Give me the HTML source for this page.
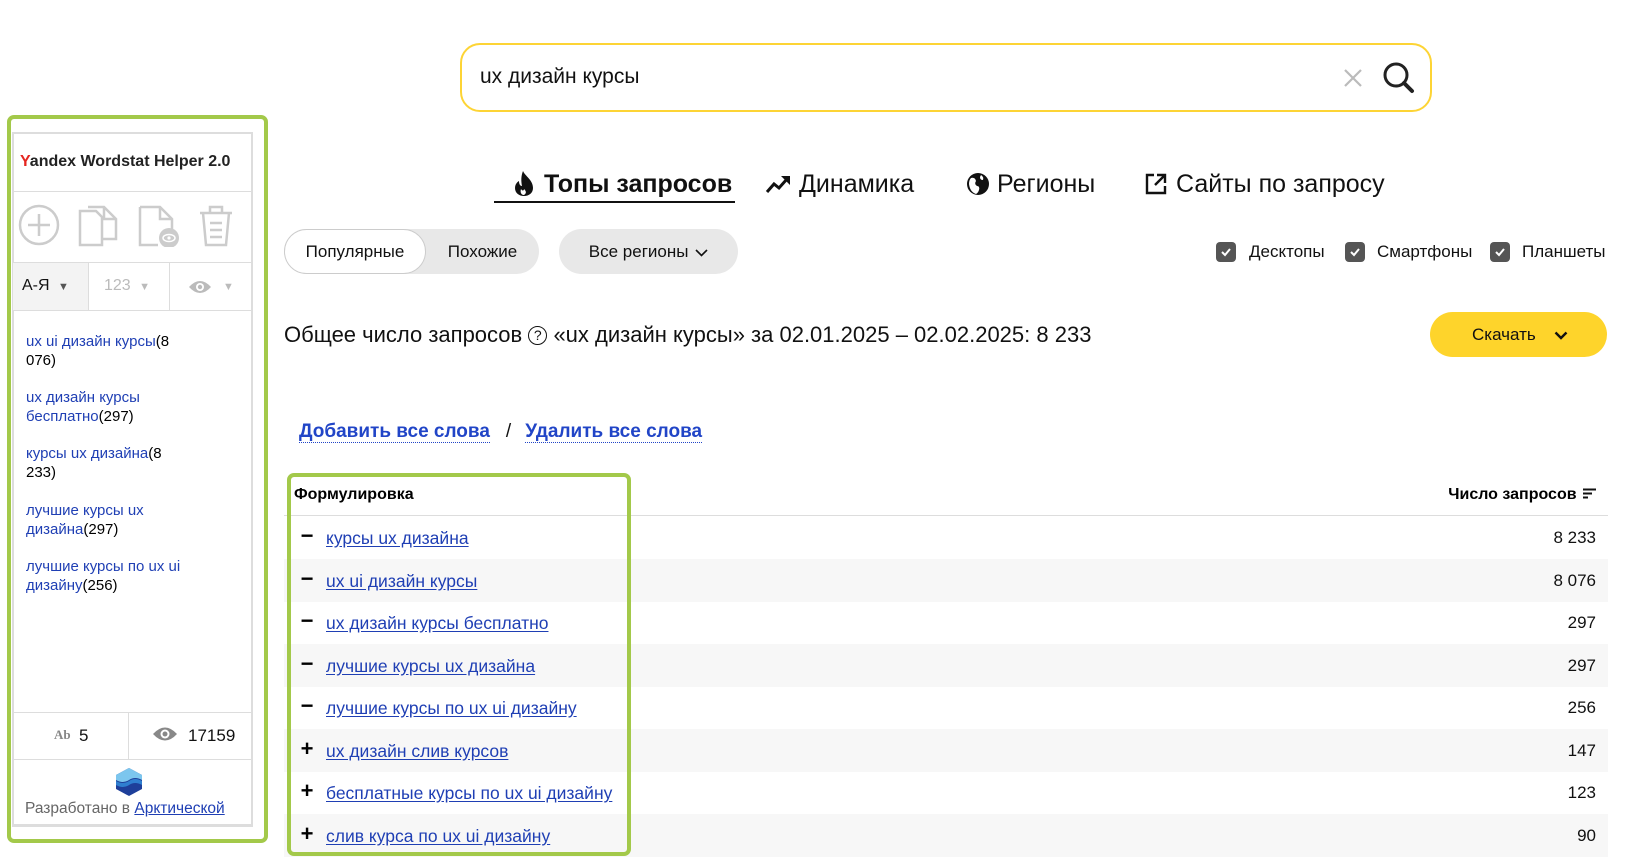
<!DOCTYPE html>
<html><head><meta charset="utf-8">
<style>
*{box-sizing:border-box;margin:0;padding:0}
body{width:1642px;height:856px;background:#fff;font-family:"Liberation Sans","DejaVu Sans",sans-serif;color:#000;position:relative;overflow:hidden}
.abs{position:absolute}
.search{left:460px;top:43px;width:972px;height:69px;border:2px solid #fdd435;border-radius:20px}
.search .q{position:absolute;left:18px;top:20px;font-size:21px;color:#111}
.panel{left:7px;top:115px;width:261px;height:728px;border:4px solid #a3c94a;border-radius:7px}
.inner{left:12px;top:132px;width:241px;height:695px;border:2px solid #ddd;border-bottom:3px solid #ddd}
.ln{background:#ddd;height:1px}
.plink{color:#1f3fb4;text-decoration:none}
.list{left:26px;font-size:15px;line-height:19px;width:165px}
.tab{font-size:25px;top:170px;color:#111}
.pill{top:229px;height:45px;font-size:17px;line-height:45px;text-align:center;color:#111}
.cb{top:242px;width:20px;height:20px;background:#555;border-radius:4px}
.cbt{top:242px;font-size:17px;line-height:20px;color:#111}
.row{left:284px;width:1324px;height:42.5px}
.row.g{background:#f7f7f7}
.sign{left:300px;font-size:22px;font-weight:bold;width:14px;text-align:center}
.lk{left:326px;font-size:17.5px;color:#1f3fb4;text-decoration:underline;text-underline-offset:2px}
.num{right:46px;font-size:17px;color:#111;text-align:right}
</style></head><body>

<div class="abs search"><span class="q">ux дизайн курсы</span>
<svg class="abs" style="left:880px;top:22px" width="22" height="22" viewBox="0 0 22 22"><path d="M3 3L19 19M19 3L3 19" stroke="#bbb" stroke-width="2.2"/></svg>
<svg class="abs" style="left:920px;top:16px" width="34" height="34" viewBox="0 0 34 34"><circle cx="14" cy="14" r="11" fill="none" stroke="#222" stroke-width="3"/><path d="M22 22L30 30" stroke="#222" stroke-width="4" stroke-linecap="round"/></svg>
</div>

<!-- left panel -->
<div class="abs panel"></div>
<div class="abs inner"></div>
<div class="abs" style="left:20px;top:153px;font-size:16px;font-weight:bold;color:#222"><span style="color:#e52620">Y</span>andex Wordstat Helper 2.0</div>
<div class="abs ln" style="left:13px;top:191px;width:239px"></div>
<svg class="abs" style="left:18px;top:204px" width="42" height="42" viewBox="0 0 42 42"><circle cx="21" cy="21" r="19" fill="none" stroke="#ccc" stroke-width="2.5"/><path d="M21 10V32M10 21H32" stroke="#ccc" stroke-width="2.5"/></svg>
<svg class="abs" style="left:78px;top:205px" width="42" height="42" viewBox="0 0 42 42" fill="none" stroke="#ccc" stroke-width="2.5"><path d="M2 6H18L24 12V40H2Z"/><path d="M10 2H26L38 14V34H24"/><path d="M26 2V14H38"/></svg>
<svg class="abs" style="left:138px;top:205px" width="42" height="42" viewBox="0 0 42 42"><g fill="none" stroke="#ccc" stroke-width="2.5"><path d="M2 2H22L34 14V24"/><path d="M2 2V40H20"/><path d="M22 2V14H34"/></g><circle cx="31" cy="33" r="10" fill="#ccc"/><ellipse cx="31" cy="33" rx="6" ry="3.5" fill="none" stroke="#fff" stroke-width="1.5"/><circle cx="31" cy="33" r="1.6" fill="#fff"/></svg>
<svg class="abs" style="left:198px;top:205px" width="36" height="42" viewBox="0 0 36 42" fill="none" stroke="#ccc" stroke-width="2.5"><path d="M2 8H34M12 8V2H24V8M5 8L8 40H28L31 8M12 18H24M12 25H24M12 32H24"/></svg>
<div class="abs ln" style="left:13px;top:262px;width:239px"></div>
<div class="abs" style="left:13px;top:263px;width:76px;height:47px;background:#f3f3f3"></div>
<div class="abs" style="left:88px;top:263px;width:1px;height:47px;background:#ddd"></div>
<div class="abs" style="left:169px;top:263px;width:1px;height:47px;background:#ddd"></div>
<div class="abs" style="left:22px;top:277px;font-size:16px;color:#111">А-Я <span style="font-size:11px;color:#555;margin-left:4px">▼</span></div>
<div class="abs" style="left:104px;top:277px;font-size:16px;color:#bbb">123 <span style="font-size:11px;margin-left:4px">▼</span></div>
<svg class="abs" style="left:188px;top:279px" width="24" height="16" viewBox="0 0 24 16"><path d="M1 8Q12 -4 23 8Q12 20 1 8Z" fill="#bbb"/><circle cx="12" cy="8" r="4" fill="#fff"/><circle cx="12" cy="8" r="2.2" fill="#bbb"/></svg>
<div class="abs" style="left:223px;top:281px;font-size:11px;color:#bbb">▼</div>
<div class="abs ln" style="left:13px;top:310px;width:239px"></div>

<div class="abs list" style="top:332px"><a class="plink">ux ui дизайн курсы</a>(8 076)</div>
<div class="abs list" style="top:388px"><a class="plink">ux дизайн курсы бесплатно</a>(297)</div>
<div class="abs list" style="top:444px"><a class="plink">курсы ux дизайна</a>(8 233)</div>
<div class="abs list" style="top:501px"><a class="plink">лучшие курсы ux дизайна</a>(297)</div>
<div class="abs list" style="top:557px"><a class="plink">лучшие курсы по ux ui дизайну</a>(256)</div>

<div class="abs ln" style="left:13px;top:712px;width:239px"></div>
<div class="abs" style="left:128px;top:712px;width:1px;height:47px;background:#ddd"></div>
<div class="abs" style="left:54px;top:727px;font-size:13px;font-weight:bold;color:#888;font-family:'Liberation Serif',serif">Ab</div>
<div class="abs" style="left:79px;top:726px;font-size:17px;color:#111">5</div>
<svg class="abs" style="left:152px;top:725px" width="26" height="18" viewBox="0 0 26 18"><path d="M1 9Q13 -4 25 9Q13 22 1 9Z" fill="#888"/><circle cx="13" cy="9" r="4.5" fill="#fff"/><circle cx="13" cy="9" r="2.5" fill="#888"/></svg>
<div class="abs" style="left:188px;top:726px;font-size:17px;color:#111">17159</div>
<div class="abs ln" style="left:13px;top:759px;width:239px"></div>
<svg class="abs" style="left:115px;top:767px" width="28" height="30" viewBox="0 0 28 30"><path d="M14 1L27 8V22L14 29L1 22V8Z" fill="#1e3f9a"/><path d="M1 8L14 1L27 8V13Q20 9 14 13Q8 17 1 13Z" fill="#7cc6ee"/><path d="M1 14Q8 18 14 14Q20 10 27 14V18Q20 14 14 18Q8 22 1 18Z" fill="#2f7fd0"/></svg>
<div class="abs" style="left:25px;top:800px;font-size:15.5px;color:#666">Разработано в <a class="plink" style="text-decoration:underline">Арктической</a></div>

<!-- tabs -->
<svg class="abs" style="left:513px;top:170px" width="22" height="27" viewBox="0 0 22 27"><path d="M10 1C12 6 20 10 20 18C20 23 16 26 11 26C6 26 2 23 2 18C2 13 6 11 6 11C6 14 7 16 9 16C8 11 8 6 10 1Z" fill="#111"/><path d="M11 25C8 25 7 22 8 19C9 21 11 21 11 19C13 21 14 23 11 25Z" fill="#fff"/></svg>
<div class="abs tab" style="left:544px;font-weight:bold">Топы запросов</div>
<div class="abs" style="left:494px;top:201px;width:241px;height:2px;background:#111"></div>
<svg class="abs" style="left:765px;top:174px" width="26" height="20" viewBox="0 0 26 20"><path d="M2 18L9 10L14 14L22 5" fill="none" stroke="#111" stroke-width="3"/><path d="M16 2H25V11Z" fill="#111"/></svg>
<div class="abs tab" style="left:799px">Динамика</div>
<svg class="abs" style="left:966px;top:172px" width="24" height="24" viewBox="0 0 24 24"><circle cx="12" cy="12" r="11" fill="#111"/><path d="M5 6Q9 5 10 9Q8 12 11 14Q14 14 13 18Q12 21 10 22Q4 20 3 12Q3 8 5 6Z M15 3Q18 5 17 8Q14 8 14 5Z" fill="#fff"/></svg>
<div class="abs tab" style="left:997px">Регионы</div>
<svg class="abs" style="left:1144px;top:172px" width="24" height="24" viewBox="0 0 24 24" fill="none" stroke="#111" stroke-width="2.4"><path d="M10 3H3V21H21V14"/><path d="M13 3H21V11M21 3L11 13"/></svg>
<div class="abs tab" style="left:1176px">Сайты по запросу</div>

<!-- filters -->
<div class="abs pill" style="left:284px;width:255px;background:#e8e8e8;border-radius:23px"></div>
<div class="abs pill" style="left:284px;width:142px;background:#fff;border:1px solid #ccc;border-radius:23px;line-height:43px">Популярные</div>
<div class="abs pill" style="left:426px;width:113px">Похожие</div>
<div class="abs pill" style="left:559px;width:179px;background:#e8e8e8;border-radius:23px">Все регионы <svg width="13" height="8" viewBox="0 0 13 8" style="margin-left:2px"><path d="M1 1L6.5 6.5L12 1" fill="none" stroke="#111" stroke-width="1.6"/></svg></div>

<div class="abs cb" style="left:1216px"></div><svg class="abs" style="left:1220px;top:246px" width="12" height="12" viewBox="0 0 12 12"><path d="M2 6L5 9L10 3" fill="none" stroke="#fff" stroke-width="2"/></svg>
<div class="abs cbt" style="left:1249px">Десктопы</div>
<div class="abs cb" style="left:1345px"></div><svg class="abs" style="left:1349px;top:246px" width="12" height="12" viewBox="0 0 12 12"><path d="M2 6L5 9L10 3" fill="none" stroke="#fff" stroke-width="2"/></svg>
<div class="abs cbt" style="left:1377px">Смартфоны</div>
<div class="abs cb" style="left:1490px"></div><svg class="abs" style="left:1494px;top:246px" width="12" height="12" viewBox="0 0 12 12"><path d="M2 6L5 9L10 3" fill="none" stroke="#fff" stroke-width="2"/></svg>
<div class="abs cbt" style="left:1522px">Планшеты</div>

<div class="abs" style="left:284px;top:322px;font-size:22px;color:#111">Общее число запросов <span style="display:inline-block;width:19px;height:19px;border:1.8px solid #111;border-radius:50%;font-size:14px;line-height:16px;text-align:center;vertical-align:2px">?</span> «ux дизайн курсы» за 02.01.2025 – 02.02.2025: 8 233</div>
<div class="abs" style="left:1430px;top:312px;width:177px;height:45px;background:#fed42b;border-radius:23px;font-size:17px;line-height:45px;color:#111;padding-left:42px">Скачать <svg width="14" height="9" viewBox="0 0 14 9" style="margin-left:14px"><path d="M1.5 1.5L7 7L12.5 1.5" fill="none" stroke="#111" stroke-width="2.4"/></svg></div>

<div class="abs" style="left:299px;top:421px;font-size:19px;font-weight:bold;color:#2145c7"><span style="border-bottom:1.5px dotted #2145c7">Добавить все слова</span><span style="color:#111;font-weight:normal;margin:0 14px 0 16px">/</span><span style="border-bottom:1.5px dotted #2145c7">Удалить все слова</span></div>

<!-- table -->
<div class="abs" style="left:294px;top:486px;font-size:16px;font-weight:bold">Формулировка</div>
<div class="abs" style="right:46px;top:486px;font-size:16px;font-weight:bold">Число запросов <svg width="13" height="11" viewBox="0 0 13 11" style="margin-left:2px"><path d="M0 1.5H13M0 5.5H9M0 9.5H5" stroke="#111" stroke-width="2"/></svg></div>
<div class="abs ln" style="left:284px;top:515px;width:1324px;background:#ddd"></div>

<div class="abs row" style="top:516px"></div>
<div class="abs row g" style="top:559px"></div>
<div class="abs row" style="top:601px"></div>
<div class="abs row g" style="top:644px"></div>
<div class="abs row" style="top:686px"></div>
<div class="abs row g" style="top:729px"></div>
<div class="abs row" style="top:771px"></div>
<div class="abs row g" style="top:814px"></div>

<div class="abs sign" style="top:523px">−</div><div class="abs lk" style="top:528px">курсы ux дизайна</div><div class="abs num" style="top:528px">8 233</div>
<div class="abs sign" style="top:566px">−</div><div class="abs lk" style="top:571px">ux ui дизайн курсы</div><div class="abs num" style="top:571px">8 076</div>
<div class="abs sign" style="top:608px">−</div><div class="abs lk" style="top:613px">ux дизайн курсы бесплатно</div><div class="abs num" style="top:613px">297</div>
<div class="abs sign" style="top:651px">−</div><div class="abs lk" style="top:656px">лучшие курсы ux дизайна</div><div class="abs num" style="top:656px">297</div>
<div class="abs sign" style="top:693px">−</div><div class="abs lk" style="top:698px">лучшие курсы по ux ui дизайну</div><div class="abs num" style="top:698px">256</div>
<div class="abs sign" style="top:736px">+</div><div class="abs lk" style="top:741px">ux дизайн слив курсов</div><div class="abs num" style="top:741px">147</div>
<div class="abs sign" style="top:778px">+</div><div class="abs lk" style="top:783px">бесплатные курсы по ux ui дизайну</div><div class="abs num" style="top:783px">123</div>
<div class="abs sign" style="top:821px">+</div><div class="abs lk" style="top:826px">слив курса по ux ui дизайну</div><div class="abs num" style="top:826px">90</div>

<div class="abs" style="left:287px;top:473px;width:344px;height:383px;border:4px solid #a3c94a;border-radius:7px"></div>
</body></html>
